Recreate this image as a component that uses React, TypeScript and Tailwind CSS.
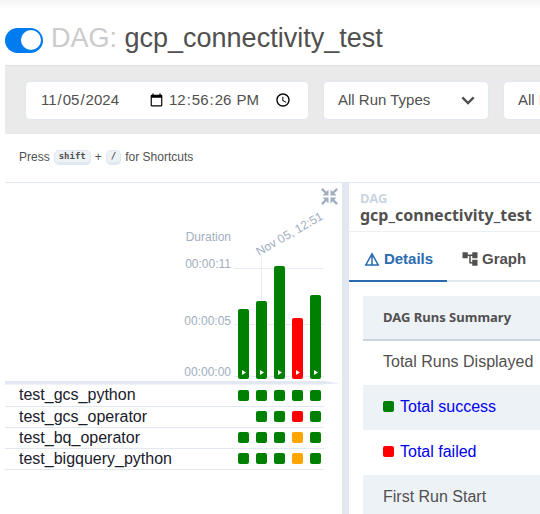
import { useState } from "react";
import { MdAccountTree, MdDetails } from "react-icons/md";

type State = "success" | "failed" | "upstream" | "none";

const squareColor: Record<State, string> = {
  success: "bg-[#008000]",
  failed: "bg-[#ff0000]",
  upstream: "bg-[#ffa500]",
  none: "bg-transparent",
};

const runs = [
  { x: 233, height: 70, color: "#008000" },
  { x: 251, height: 78, color: "#008000" },
  { x: 269, height: 113, color: "#008000" },
  { x: 287, height: 61, color: "#ff0000" },
  { x: 305, height: 84, color: "#008000" },
];

const tasks: { name: string; states: State[] }[] = [
  { name: "test_gcs_python", states: ["success", "success", "success", "success", "success"] },
  { name: "test_gcs_operator", states: ["none", "success", "success", "failed", "success"] },
  { name: "test_bq_operator", states: ["success", "success", "success", "upstream", "success"] },
  { name: "test_bigquery_python", states: ["success", "success", "success", "upstream", "success"] },
];

function Header() {
  const [on, setOn] = useState(true);
  return (
    <header className="flex h-[65px] shrink-0 items-center gap-2 bg-linear-to-b from-[#f5f5f5] to-white to-15% pt-[15px] pl-[5px]">
      <label className="flex h-[25px] w-[38px] cursor-pointer items-center rounded-full bg-[#cccccc] px-[2px] has-checked:justify-end has-checked:bg-[#017cee]">
        <input
          type="checkbox"
          aria-label="Pause or unpause DAG"
          className="sr-only"
          checked={on}
          onChange={(e) => setOn(e.target.checked)}
        />
        <span className="size-[20px] rounded-full bg-white" />
      </label>
      <h1 className="pb-1 text-[27px] leading-8 whitespace-nowrap">
        <span className="text-[#cbcbcb]">DAG:</span> gcp_connectivity_test
      </h1>
    </header>
  );
}

function FilterSelect({ label, options }: { label: string; options: string[] }) {
  return (
    <div className="relative w-[166px] shrink-0">
      <select
        aria-label={label}
        className="h-[39px] w-full appearance-none rounded-[5px] border border-[#e2e8f0] bg-white px-[14px] text-[15px]"
      >
        {options.map((o) => (
          <option key={o}>{o}</option>
        ))}
      </select>
      <svg viewBox="0 0 14 9" className="pointer-events-none absolute top-[15px] right-[14px] h-[9px] w-[14px]" aria-hidden="true">
        <path d="M1.3 1.3 7 7l5.700-5.700" fill="none" stroke="#51504f" strokeWidth="2.400" />
      </svg>
    </div>
  );
}

function Filters() {
  return (
    <div className="ml-[5px] flex h-[69px] shrink-0 items-center gap-[14px] overflow-hidden border-t border-[#dfe2e6] bg-[#eaeaea] pl-5">
      <div className="flex h-[39px] w-[284px] shrink-0 items-center rounded-[5px] border border-[#e2e8f0] bg-white px-[14px] text-[15px]">
        <input type="date" aria-label="Base date" defaultValue="2024-11-05" className="w-[126px] shrink-0" />
        <input type="time" aria-label="Base time" step={1} defaultValue="12:56:26" className="ml-[2px] w-[126px] shrink-0" />
      </div>
      <FilterSelect label="Run type" options={["All Run Types", "backfill", "manual", "scheduled"]} />
      <FilterSelect label="Run state" options={["All Run States", "failed", "running", "success"]} />
    </div>
  );
}

function Key({ children }: { children: string }) {
  return (
    <kbd className="rounded-[5px] border border-b-[3px] border-[#e2e8f0] bg-[#edf2f7] px-1 font-['DejaVu_Sans_Mono',monospace] text-[9px] leading-[11px] font-bold">
      {children}
    </kbd>
  );
}

function DurationChart() {
  return (
    <svg width="337" height="198" className="block font-['Liberation_Sans',Arial,sans-serif]" role="img" aria-label="Run durations">
      <g stroke="#e8ebf3" strokeWidth="1">
        <path d="M229 85.500h90M229 141.500h90M229 193.500h90M256.500 74v44" />
      </g>
      <g fill="#a0aec0" fontSize="12" textAnchor="end">
        <text x="226" y="58">Duration</text>
        <text x="226" y="85">00:00:11</text>
        <text x="226" y="142">00:00:05</text>
        <text x="226" y="193">00:00:00</text>
      </g>
      <text transform="translate(254 73) rotate(-30)" fill="#a0aec0" fontSize="12">
        Nov 05, 12:51
      </text>
      {runs.map((r) => (
        <g key={r.x}>
          <rect x={r.x} y={196 - r.height} width="11" height={r.height} rx="2" fill={r.color} />
          <path d={`M${r.x + 4} 187v5l4-2.500z`} fill="#fff" />
        </g>
      ))}
    </svg>
  );
}

function GridPanel() {
  return (
    <section className="relative w-[337px] shrink-0">
      <button type="button" aria-label="Hide details" className="absolute top-[5px] right-1">
        <svg viewBox="0 0 17 17" className="size-[17px]" fill="#a0aec0" aria-hidden="true">
          <path d="M7.500 7.500H1.500l2.200-2.200L0 1.800 1.800 0l3.500 3.700 2.200-2.200zM9.500 7.500v-6l2.200 2.200L15.200 0 17 1.800l-3.700 3.500 2.200 2.200zM7.500 9.500v6l-2.200-2.200L1.800 17 0 15.200l3.700-3.500-2.200-2.200zM9.500 9.500h6l-2.200 2.200 3.700 3.500-1.800 1.800-3.500-3.700-2.200 2.200z" />
        </svg>
      </button>
      <DurationChart />
      <svg viewBox="0 0 337 4" className="block h-1 w-full" aria-hidden="true">
        <path d="M0 0h319l16 2.500-16 .500H0z" fill="#e2e8f0" />
        <path d="M0 3.500h319" stroke="#f0f2f7" />
      </svg>
      <table className="w-[319px] border-collapse text-base leading-5 text-[#1a202c]">
        <tbody>
          {tasks.map((t) => (
            <tr key={t.name} className="h-[21px] border-b border-[#e2e8f0]">
              <th scope="row" className="p-0 pl-[14px] text-left font-normal">
                {t.name}
              </th>
              <td className="p-0">
                <div className="flex justify-end gap-[7px] pr-[3px]">
                  {t.states.map((s, i) => (
                    <span key={i} className={`size-[11px] rounded-[2px] ${squareColor[s]}`} />
                  ))}
                </div>
              </td>
            </tr>
          ))}
        </tbody>
      </table>
    </section>
  );
}

function DetailsPanel() {
  return (
    <section className="min-w-0 flex-1 overflow-hidden border-l-[7px] border-[#e2e8f0]">
      <div className="h-[49px] border-b border-[#edf0f3] pt-[7px] pl-[11px] font-['Noto_Sans',sans-serif] font-bold">
        <p className="text-[13px] leading-4 text-[#cbd5e0]">DAG</p>
        <h2 className="text-base leading-[18px]">gcp_connectivity_test</h2>
      </div>
      <div role="tablist" className="flex h-[50px] border-b-2 border-[#e2e8f0] text-[15px] font-bold">
        <button
          type="button"
          role="tab"
          aria-selected="true"
          className="-mb-[2px] flex w-[98px] shrink-0 items-center justify-center gap-[3px] border-b-2 border-[#2b6cb0] pt-[6px] text-[#2b6cb0]"
        >
          <MdDetails className="size-[18px]" />
          Details
        </button>
        <button type="button" role="tab" aria-selected="false" className="flex shrink-0 items-center gap-[3px] px-[14px] pt-[6px]">
          <MdAccountTree className="size-[18px]" />
          Graph
        </button>
      </div>
      <table className="mt-[14px] ml-[14px] w-full border-collapse text-base whitespace-nowrap">
        <thead>
          <tr className="h-11 border-b-2 border-[#cbd5e0] bg-[#edf2f7]">
            <th className="pl-5 text-left font-['Noto_Sans',sans-serif] text-[13px] font-bold">DAG Runs Summary</th>
          </tr>
        </thead>
        <tbody>
          <tr className="h-[45px]">
            <td className="pb-[2px] pl-5">Total Runs Displayed</td>
          </tr>
          <tr className="h-[45px] bg-[#edf2f7]">
            <td className="pb-[2px] pl-5">
              <a href="#success" className="flex items-center gap-[6px] text-[#0000ee]">
                <span className="size-[11px] rounded-[2px] bg-[#008000]" />
                Total success
              </a>
            </td>
          </tr>
          <tr className="h-[45px]">
            <td className="pb-[2px] pl-5">
              <a href="#failed" className="flex items-center gap-[6px] text-[#0000ee]">
                <span className="size-[11px] rounded-[2px] bg-[#ff0000]" />
                Total failed
              </a>
            </td>
          </tr>
          <tr className="h-[45px] bg-[#edf2f7]">
            <td className="pb-[2px] pl-5">First Run Start</td>
          </tr>
        </tbody>
      </table>
    </section>
  );
}

export default function App() {
  return (
    <div className="flex h-screen flex-col overflow-hidden bg-white font-['Liberation_Sans',Arial,sans-serif] text-[#51504f]">
      <Header />
      <Filters />
      <p className="flex h-12 shrink-0 items-center gap-1 pb-[2px] pl-[19px] text-xs">
        Press <Key>shift</Key> + <Key>/</Key> for Shortcuts
      </p>
      <main className="ml-[5px] flex min-h-0 flex-1 border-t border-[#e2e8f0]">
        <GridPanel />
        <DetailsPanel />
      </main>
    </div>
  );
}
